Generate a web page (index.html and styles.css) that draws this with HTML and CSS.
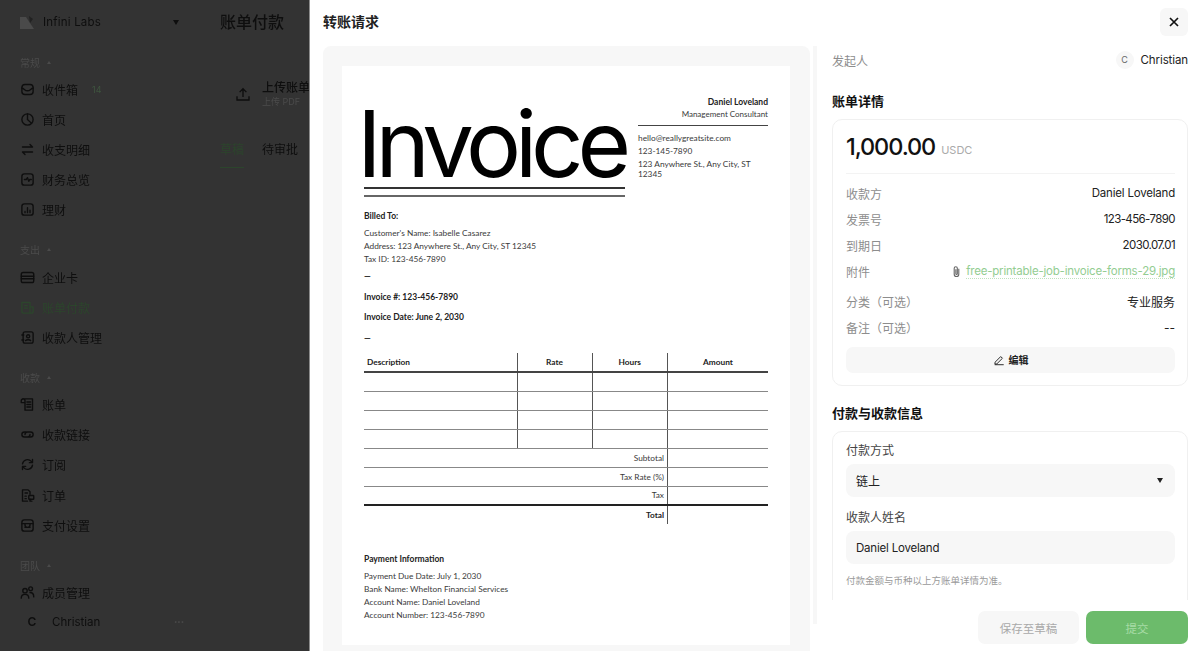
FILE: index.html
```html
<!DOCTYPE html>
<html lang="en">
<head>
    <meta charset="UTF-8">
    <meta name="viewport" content="width=device-width, initial-scale=1.0">
    <title>转账请求</title>
    <link rel="stylesheet" href="styles.css">
</head>
<body>
    <div class="app">
        <!-- page behind the drawer, dimmed -->
        <div class="behind">
            <aside class="sidebar">
                <div class="switcher">
                    <svg class="logo" viewBox="0 0 14 14"><path d="M0 2h6l8 12H0z" fill="#4a4a4a"/><path d="M9 1l4 3-3 4z" fill="#222"/></svg>
                    <span class="switcher-name">Infini Labs</span>
                    <span class="caret"></span>
                </div>

                <div class="nav-label">常规<span class="tri"></span></div>
                <a class="nav-item"><svg viewBox="0 0 24 24"><rect x="3" y="4" width="18" height="16" rx="5"/><path d="M3 10c4 0 4 4 9 4s5-4 9-4"/></svg>收件箱<span class="badge">14</span></a>
                <a class="nav-item"><svg viewBox="0 0 24 24"><circle cx="12" cy="12" r="9"/><path d="M12 3v9l6.5 6.2M12 12l-.2 0"/></svg>首页</a>
                <a class="nav-item"><svg viewBox="0 0 24 24"><path d="M4 8h16M16 4l4 4M20 16H4M8 20l-4-4"/></svg>收支明细</a>
                <a class="nav-item"><svg viewBox="0 0 24 24"><rect x="3" y="3" width="18" height="18" rx="4"/><path d="M7 12h3l2-3 2 6 1.5-3H18"/></svg>财务总览</a>
                <a class="nav-item"><svg viewBox="0 0 24 24"><rect x="3" y="3" width="18" height="18" rx="4"/><path d="M8 17v-2M12 17V9M16 17v-4"/></svg>理财</a>

                <div class="nav-label section">支出<span class="tri"></span></div>
                <a class="nav-item"><svg viewBox="0 0 24 24"><rect x="2" y="4" width="20" height="16" rx="3"/><path d="M2 10h20M2 14h20"/></svg>企业卡</a>
                <a class="nav-item active"><svg viewBox="0 0 24 24"><path d="M3 4h13v17H6a3 3 0 0 1-3-3zM16 11h5v7a3 3 0 0 1-3 3h-2M7 9h5M7 13h5"/></svg>账单付款</a>
                <a class="nav-item"><svg viewBox="0 0 24 24"><rect x="5" y="3" width="16" height="18" rx="3"/><circle cx="13" cy="10" r="2.5"/><path d="M9 17c1-2 7-2 8 0M3 8h3M3 16h3"/></svg>收款人管理</a>

                <div class="nav-label section">收款<span class="tri"></span></div>
                <a class="nav-item"><svg viewBox="0 0 24 24"><path d="M6 3h14v18H8V6a3 3 0 0 0-6 0v3h6M6 3a3 3 0 0 0-3 1M11 8h6M11 12h6M11 16h6"/></svg>账单</a>
                <a class="nav-item"><svg viewBox="0 0 24 24"><path d="M10 8H7a4 4 0 0 0 0 8h5a4 4 0 0 0 4-4M14 16h3a4 4 0 0 0 0-8h-5a4 4 0 0 0-4 4"/></svg>收款链接</a>
                <a class="nav-item"><svg viewBox="0 0 24 24"><path d="M4 11a8 8 0 0 1 14-4l2 2M20 13a8 8 0 0 1-14 4l-2-2M20 4v5h-5M4 20v-5h5"/></svg>订阅</a>
                <a class="nav-item"><svg viewBox="0 0 24 24"><path d="M12 21H4V3h9l3 3v4M8 8h4M8 13h2M8 17h2"/><rect x="14" y="12" width="8" height="6" rx="1"/><path d="M16 18v3h3"/></svg>订单</a>
                <a class="nav-item"><svg viewBox="0 0 24 24"><rect x="3" y="3" width="18" height="18" rx="4"/><path d="M3 9h18M8 9v2a2 2 0 0 0 8 0V9M8 15h8"/></svg>支付设置</a>

                <div class="nav-label section">团队<span class="tri"></span></div>
                <a class="nav-item"><svg viewBox="0 0 24 24"><circle cx="8" cy="9" r="3.5"/><circle cx="17" cy="6" r="3"/><path d="M2 21c0-8 12-8 12 0M16 12c3.500 0 6 2 6 7"/></svg>成员管理</a>

                <div class="user">
                    <span class="user-avatar">C</span>
                    <span class="user-name">Christian</span>
                    <span class="user-more">•••</span>
                </div>
            </aside>

            <main class="behind-main">
                <h1>账单付款</h1>
                <div class="upload">
                    <svg viewBox="0 0 24 24"><path d="M12 16V5M7.500 9.500L12 5l4.500 4.500M4 15v5h16v-5"/></svg>
                    <div class="upload-text">
                        <b>上传账单</b>
                        <span>上传 PDF</span>
                    </div>
                </div>
                <div class="tabs">
                    <span class="tab on">草稿</span>
                    <span class="tab">待审批</span>
                </div>
            </main>
        </div>

        <section class="drawer">
            <header class="drawer-head">
                <h2>转账请求</h2>
                <button class="close"><svg viewBox="0 0 12 12"><path d="M2 2l8 8M10 2l-8 8"/></svg></button>
            </header>

            <div class="drawer-body">
                <div class="preview">
                    <div class="paper">
                        <div class="inv-top">
                            <div class="inv-left">
                                <div class="inv-title">Invoice</div>
                                <div class="rule-a"></div>
                                <div class="rule-b"></div>
                            </div>
                            <div class="inv-right">
                                <div class="inv-name">Daniel Loveland</div>
                                <div class="inv-role">Management Consultant</div>
                                <div class="inv-rule"></div>
                                <div class="inv-contact">hello@reallygreatsite.com</div>
                                <div class="inv-contact">123-145-7890</div>
                                <div class="inv-addr">123 Anywhere St., Any City, ST 12345</div>
                            </div>
                        </div>

                        <div class="inv-bold billed">Billed To:</div>
                        <div class="inv-lines">
                            <div>Customer's Name: Isabelle Casarez</div>
                            <div>Address: 123 Anywhere St., Any City, ST 12345</div>
                            <div>Tax ID: 123-456-7890</div>
                        </div>
                        <div class="inv-bold dash-a">—</div>
                        <div class="inv-bold num">Invoice #: 123-456-7890</div>
                        <div class="inv-bold date">Invoice Date: June 2, 2030</div>
                        <div class="inv-bold dash-b">—</div>

                        <table class="inv-table">
                            <colgroup><col class="c1"><col class="c2"><col class="c3"><col class="c4"></colgroup>
                            <tr class="head"><th class="left">Description</th><th>Rate</th><th>Hours</th><th class="last">Amount</th></tr>
                            <tr><td></td><td></td><td></td><td class="last"></td></tr>
                            <tr><td></td><td></td><td></td><td class="last"></td></tr>
                            <tr><td></td><td></td><td></td><td class="last"></td></tr>
                            <tr><td></td><td></td><td></td><td class="last"></td></tr>
                            <tr><td colspan="3" class="sum">Subtotal</td><td class="last"></td></tr>
                            <tr><td colspan="3" class="sum">Tax Rate (%)</td><td class="last"></td></tr>
                            <tr class="pre-total"><td colspan="3" class="sum">Tax</td><td class="last"></td></tr>
                            <tr class="total"><td colspan="3" class="sum">Total</td><td class="last"></td></tr>
                        </table>

                        <div class="inv-bold pay">Payment Information</div>
                        <div class="inv-lines">
                            <div>Payment Due Date: July 1, 2030</div>
                            <div>Bank Name: Whelton Financial Services</div>
                            <div>Account Name: Daniel Loveland</div>
                            <div>Account Number: 123-456-7890</div>
                        </div>
                    </div>
                </div>

                <div class="scroll-strip"></div>

                <div class="side">
                    <div class="side-scroll">
                        <div class="starter">
                            <span class="muted">发起人</span>
                            <span class="starter-user"><i>C</i>Christian</span>
                        </div>

                        <h3>账单详情</h3>
                        <div class="card">
                            <div class="amount"><b>1,000.00</b><span>USDC</span></div>
                            <div class="row"><span class="muted">收款方</span><span class="val">Daniel Loveland</span></div>
                            <div class="row"><span class="muted">发票号</span><span class="val digits">123-456-7890</span></div>
                            <div class="row"><span class="muted">到期日</span><span class="val digits">2030.07.01</span></div>
                            <div class="row attach">
                                <span class="muted">附件</span>
                                <span class="file">
                                    <svg viewBox="0 0 12 14"><path d="M8.500 4v6a2.500 2.500 0 0 1-5 0V3.500a1.700 1.700 0 0 1 3.400 0V9.500a.8.8 0 0 1-1.600 0V4.500"/></svg>
                                    <a>free-printable-job-invoice-forms-29.jpg</a>
                                </span>
                            </div>
                            <div class="row"><span class="muted">分类（可选）</span><span>专业服务</span></div>
                            <div class="row"><span class="muted">备注（可选）</span><span>--</span></div>
                            <button class="edit">
                                <svg viewBox="0 0 14 14"><path d="M2 12.500h10.500M2.500 9.500L9 3l2 2-6.500 6.500-2.300.3z"/></svg>编辑
                            </button>
                        </div>

                        <h3>付款与收款信息</h3>
                        <div class="card form">
                            <label>付款方式</label>
                            <div class="field select">链上<span class="caret"></span></div>
                            <label class="second">收款人姓名</label>
                            <div class="field name">Daniel Loveland</div>
                            <p class="hint">付款金额与币种以上方账单详情为准。</p>
                        </div>
                    </div>

                    <footer class="side-foot">
                        <button class="btn-draft">保存至草稿</button>
                        <button class="btn-submit">提交</button>
                    </footer>
                </div>
            </div>
        </section>
    </div>
</body>
</html>
```

FILE: styles.css
```css
* {
    box-sizing: border-box;
}

body {
    margin: 0;
    height: 651px;
    overflow: hidden;
    background: #fff;
    font-family: "Inter", "Noto Sans CJK SC", sans-serif;
    color: #222;
}

.app {
    display: flex;
    height: 651px;
}

/* Dimmed page behind the drawer */
.behind {
    display: flex;
    flex: 0 0 309px;
    overflow: hidden;
    background: #333;
    color: #0e0e0e;
    filter: blur(0.4px);
}

.sidebar {
    flex: 0 0 204px;
    padding: 0 0 0 20px;
}

.switcher {
    display: flex;
    align-items: center;
    height: 44px;
    margin-bottom: 8px;
}

.logo {
    width: 14px;
    height: 14px;
    margin-right: 9px;
}

.switcher-name {
    flex: 1;
    font-size: 11.500px;
    letter-spacing: 0.2px;
}

.caret {
    display: inline-block;
    width: 0;
    height: 0;
    border-left: 3.500px solid transparent;
    border-right: 3.500px solid transparent;
    border-top: 5px solid currentColor;
}

.switcher .caret {
    margin-right: 25px;
}

.nav-label {
    display: flex;
    align-items: center;
    height: 20px;
    margin-bottom: 2px;
    font-size: 10px;
    color: #4b4b4b;
}

.nav-label.section {
    margin-top: 15px;
}

.tri {
    width: 0;
    height: 0;
    margin-left: 7px;
    border-left: 2.500px solid transparent;
    border-right: 2.500px solid transparent;
    border-bottom: 3px solid #4b4b4b;
}

.nav-item {
    display: flex;
    align-items: center;
    height: 30.200px;
    font-size: 12px;
}

.nav-item svg {
    flex: none;
    width: 15px;
    height: 15px;
    margin-right: 7px;
    fill: none;
    stroke: currentColor;
    stroke-width: 2.200;
    stroke-linecap: round;
    stroke-linejoin: round;
}

.nav-item.active {
    color: #2c452c;
}

.badge {
    margin-left: 14px;
    font-size: 9px;
    color: #3f553f;
}

.user {
    display: flex;
    align-items: center;
    height: 30px;
    margin-top: -1px;
}

.user-avatar {
    width: 24px;
    text-align: center;
    font-size: 12px;
    font-weight: 600;
}

.user-name {
    flex: 1;
    margin-left: 8px;
    font-size: 11.500px;
}

.user-more {
    margin-right: 20px;
    font-size: 6px;
    color: #4b4b4b;
}

.behind-main {
    flex: 1;
    padding-left: 16px;
    white-space: nowrap;
}

.behind-main h1 {
    margin: 0;
    height: 44px;
    font-size: 16px;
    font-weight: 500;
    line-height: 44px;
}

.upload {
    display: flex;
    align-items: center;
    height: 58px;
    margin-top: 21px;
    padding-left: 14px;
}

.upload svg {
    flex: none;
    width: 18px;
    height: 18px;
    margin-right: 10px;
    fill: none;
    stroke: #0e0e0e;
    stroke-width: 1.800;
}

.upload-text b {
    display: block;
    font-size: 12px;
    font-weight: 500;
    line-height: 15px;
}

.upload-text span {
    display: block;
    font-size: 9px;
    line-height: 13px;
    color: #4b4b4b;
}

.tabs {
    display: flex;
    gap: 18px;
    margin-top: 18px;
    font-size: 12px;
}

.tab {
    height: 27px;
    line-height: 18px;
}

.tab.on {
    border-bottom: 1px solid #2c452c;
    color: #2c452c;
}

/* Drawer */
.drawer {
    display: flex;
    flex: 1;
    flex-direction: column;
    padding-left: 13px;
    border-left: 1px solid #8c8c8c;
    background: #fff;
}

.drawer-head {
    display: flex;
    flex: 0 0 46px;
    align-items: flex-start;
    justify-content: space-between;
    padding-right: 12px;
}

.drawer-head h2 {
    margin: 0;
    font-size: 14px;
    font-weight: 600;
    line-height: 44px;
}

.close {
    display: flex;
    align-items: center;
    justify-content: center;
    width: 28px;
    height: 28px;
    margin-top: 8px;
    padding: 0;
    border: none;
    border-radius: 6px;
    background: #f7f7f7;
}

.close svg {
    width: 12px;
    height: 12px;
    fill: none;
    stroke: #111;
    stroke-width: 1.700;
}

.drawer-body {
    display: flex;
    flex: 1;
    min-height: 0;
}

.preview {
    flex: 0 0 487px;
    padding: 20px 20px 6px 19px;
    border-radius: 8px 8px 0 0;
    background: #f7f7f7;
}

.paper {
    height: 579px;
    padding: 0 22px;
    background: #fff;
    font-family: "Lato", sans-serif;
    font-size: 8.300px;
    line-height: 13px;
    color: #3a3a3a;
}

.inv-top {
    display: flex;
    gap: 13px;
    padding-top: 30px;
}

.inv-left {
    flex: 0 0 261px;
}

.inv-title {
    height: 91px;
    margin-left: -7px;
    font-family: "Inter", sans-serif;
    font-size: 92px;
    line-height: 95px;
    letter-spacing: -6.200px;
    white-space: nowrap;
    color: #000;
}

.rule-a {
    height: 1.500px;
    background: #333;
}

.rule-b {
    height: 2px;
    margin-top: 6.500px;
    background: #666;
}

.inv-right {
    flex: 1;
}

.inv-name {
    line-height: 12px;
    text-align: right;
    font-size: 8.500px;
    font-weight: 700;
    color: #222;
}

.inv-role {
    line-height: 12px;
    text-align: right;
    font-size: 8px;
}

.inv-rule {
    height: 1px;
    margin: 5px 0 6px;
    background: #444;
}

.inv-addr {
    margin-top: 1px;
    line-height: 10px;
}

.inv-bold {
    font-size: 8.500px;
    font-weight: 700;
    color: #222;
}

.billed {
    margin-top: 12.500px;
    margin-bottom: 4.500px;
}

.dash-a {
    margin-top: 4px;
}

.num {
    margin-top: 7.500px;
}

.date {
    margin-top: 7px;
}

.dash-b {
    margin-top: 8px;
}

.inv-table {
    width: 404px;
    margin-top: 8.500px;
    border-collapse: collapse;
    table-layout: fixed;
}

.c1 {
    width: 153px;
}

.c2 {
    width: 75px;
}

.c3 {
    width: 75.500px;
}

.inv-table tr {
    height: 19px;
}

.inv-table th,
.inv-table td {
    padding: 0;
    border-right: 1px solid #555;
    border-bottom: 1px solid #888;
    line-height: 10px;
}

.inv-table th {
    font-weight: 700;
    color: #222;
    border-bottom: 2px solid #444;
}

.inv-table th.left {
    padding-left: 3px;
    text-align: left;
}

.inv-table .last {
    border-right: none;
}

.inv-table td.sum {
    padding-right: 3px;
    text-align: right;
}

.inv-table tr.pre-total td {
    border-bottom: 2px solid #222;
}

.inv-table tr.total td {
    border-bottom: none;
}

.inv-table tr.total td.sum {
    font-weight: 700;
    color: #222;
}

.pay {
    margin-top: 28.500px;
    margin-bottom: 4px;
}

.scroll-strip {
    flex: none;
    width: 4px;
    height: 578px;
    margin: 0 15px 0 3px;
    background: #f7f7f7;
}

/* Right column */
.side {
    display: flex;
    flex: 0 0 356px;
    flex-direction: column;
    min-height: 0;
}

.side-scroll {
    flex: 1;
    min-height: 0;
    overflow: hidden;
    font-size: 12px;
}

.muted {
    color: #8d8d8d;
}

.starter {
    display: flex;
    align-items: center;
    justify-content: space-between;
    height: 28px;
}

.starter-user {
    display: flex;
    align-items: center;
    font-size: 11.500px;
    letter-spacing: -0.100px;
}

.starter-user i {
    width: 18px;
    height: 18px;
    margin-right: 7px;
    border-radius: 50%;
    background: #f7f7f7;
    text-align: center;
    font-size: 9px;
    font-style: normal;
    line-height: 18px;
    color: #666;
}

.side-scroll h3 {
    margin: 17px 0 8px;
    font-size: 13px;
    font-weight: 600;
    line-height: 20px;
    color: #111;
}

.card {
    padding: 0 12px 12px 13px;
    border: 1px solid #f0f0f0;
    border-radius: 10px;
}

.amount {
    display: flex;
    align-items: center;
    height: 54px;
    margin-bottom: 6px;
    border-bottom: 1px solid #f3f3f3;
}

.amount b {
    font-size: 23.500px;
    font-weight: 500;
    letter-spacing: -1.100px;
    color: #111;
}

.amount span {
    margin: 6px 0 0 6px;
    font-size: 11px;
    color: #aaa;
}

.row {
    display: flex;
    align-items: center;
    justify-content: space-between;
    height: 26px;
}

.row .val {
    font-size: 11.500px;
    letter-spacing: -0.200px;
}

.row .val.digits {
    letter-spacing: -0.600px;
}

.row.attach {
    margin-bottom: 4px;
}

.file {
    display: flex;
    align-items: center;
    font-size: 11.500px;
    letter-spacing: -0.200px;
    color: #93cd92;
}

.file svg {
    width: 11px;
    height: 13px;
    margin-right: 4px;
    fill: none;
    stroke: #666;
    stroke-width: 1.200;
}

.file a {
    border-bottom: 1px dotted #bfe2be;
    line-height: 14px;
}

.edit {
    display: flex;
    align-items: center;
    justify-content: center;
    width: 100%;
    height: 26px;
    margin-top: 7px;
    padding-bottom: 2px;
    border: none;
    border-radius: 7px;
    background: #f7f7f7;
    font-family: inherit;
    font-size: 10px;
    font-weight: 600;
    color: #222;
}

.edit svg {
    width: 12px;
    height: 12px;
    margin-right: 4px;
    fill: none;
    stroke: #222;
    stroke-width: 1.100;
}

.card.form {
    padding-top: 10px;
    padding-bottom: 60px;
}

.form label {
    display: block;
    line-height: 18px;
    color: #444;
}

.form label.second {
    margin-top: 12px;
}

.field {
    display: flex;
    align-items: center;
    justify-content: space-between;
    height: 33px;
    margin-top: 4px;
    padding: 0 12px 0 10px;
    border-radius: 8px;
    background: #f7f7f7;
    color: #222;
}

.field.name {
    font-size: 11.500px;
    letter-spacing: -0.200px;
}

.hint {
    margin: 10px 0 0;
    font-size: 9.500px;
    line-height: 14px;
    color: #9a9a9a;
}

.side-foot {
    display: flex;
    flex: 0 0 51px;
    justify-content: flex-end;
    gap: 7px;
    padding-top: 11px;
}

.side-foot button {
    height: 33px;
    border: none;
    border-radius: 7px;
    font-family: inherit;
    font-size: 11.500px;
}

.btn-draft {
    width: 101px;
    background: #f7f7f7;
    color: #a9a9a9;
}

.btn-submit {
    width: 102px;
    background: #6cbb6b;
    color: #a7dba6;
}
```
